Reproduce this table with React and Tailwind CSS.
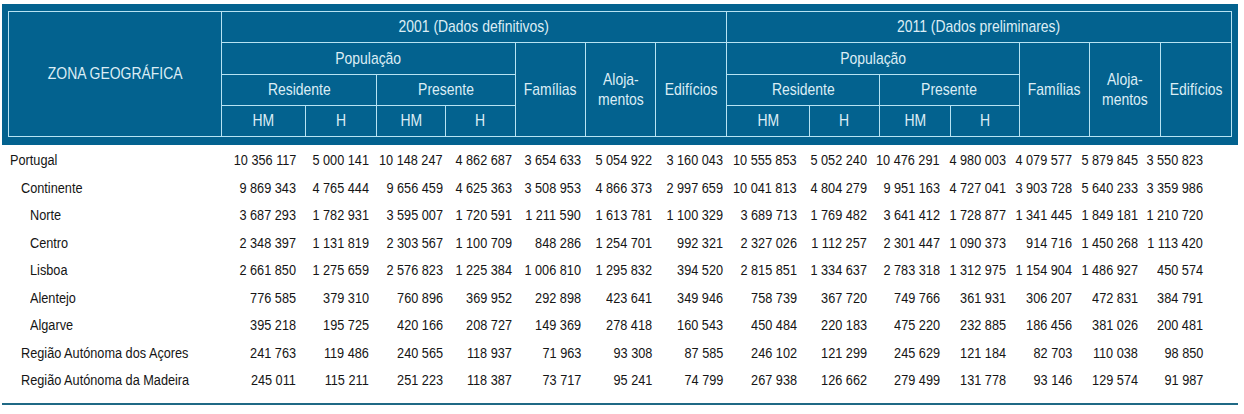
const rows = [
  { name: "Portugal", indent: "pl-[2px]", v: ["10 356 117", "5 000 141", "10 148 247", "4 862 687", "3 654 633", "5 054 922", "3 160 043", "10 555 853", "5 052 240", "10 476 291", "4 980 003", "4 079 577", "5 879 845", "3 550 823"] },
  { name: "Continente", indent: "pl-[13px]", v: ["9 869 343", "4 765 444", "9 656 459", "4 625 363", "3 508 953", "4 866 373", "2 997 659", "10 041 813", "4 804 279", "9 951 163", "4 727 041", "3 903 728", "5 640 233", "3 359 986"] },
  { name: "Norte", indent: "pl-[22px]", v: ["3 687 293", "1 782 931", "3 595 007", "1 720 591", "1 211 590", "1 613 781", "1 100 329", "3 689 713", "1 769 482", "3 641 412", "1 728 877", "1 341 445", "1 849 181", "1 210 720"] },
  { name: "Centro", indent: "pl-[22px]", v: ["2 348 397", "1 131 819", "2 303 567", "1 100 709", "848 286", "1 254 701", "992 321", "2 327 026", "1 112 257", "2 301 447", "1 090 373", "914 716", "1 450 268", "1 113 420"] },
  { name: "Lisboa", indent: "pl-[22px]", v: ["2 661 850", "1 275 659", "2 576 823", "1 225 384", "1 006 810", "1 295 832", "394 520", "2 815 851", "1 334 637", "2 783 318", "1 312 975", "1 154 904", "1 486 927", "450 574"] },
  { name: "Alentejo", indent: "pl-[22px]", v: ["776 585", "379 310", "760 896", "369 952", "292 898", "423 641", "349 946", "758 739", "367 720", "749 766", "361 931", "306 207", "472 831", "384 791"] },
  { name: "Algarve", indent: "pl-[22px]", v: ["395 218", "195 725", "420 166", "208 727", "149 369", "278 418", "160 543", "450 484", "220 183", "475 220", "232 885", "186 456", "381 026", "200 481"] },
  { name: "Região Autónoma dos Açores", indent: "pl-[13px]", v: ["241 763", "119 486", "240 565", "118 937", "71 963", "93 308", "87 585", "246 102", "121 299", "245 629", "121 184", "82 703", "110 038", "98 850"] },
  { name: "Região Autónoma da Madeira", indent: "pl-[13px]", v: ["245 011", "115 211", "251 223", "118 387", "73 717", "95 241", "74 799", "267 938", "126 662", "279 499", "131 778", "93 146", "129 574", "91 987"] },
];

const pads = ["pr-[9px]", "pr-[7px]", "pr-[2px]", "pr-[3px]", "pr-[4px]", "pr-[3px]", "pr-[3px]", "pr-[12px]", "pr-[12px]", "pr-[10px]", "pr-[13px]", "pr-[17px]", "pr-[22px]", "pr-[28px]"];

const cell = "bg-[#03628f] flex items-center justify-center text-center whitespace-nowrap";

// no narrow font installed, so squeeze the glyphs horizontally
function Narrow({ children, origin = "origin-center" }) {
  return <span className={`inline-block shrink-0 scale-x-[0.82] ${origin}`}>{children}</span>;
}

function Block({ year, c }) {
  return (
    <>
      <div className={`${cell} ${c.year} row-start-1 col-span-7`}><Narrow>{year}</Narrow></div>
      <div className={`${cell} ${c.pop} row-start-2 col-span-4`}><Narrow>População</Narrow></div>
      <div className={`${cell} ${c.fam} row-start-2 row-span-3`}><Narrow>Famílias</Narrow></div>
      <div className={`${cell} ${c.alo} row-start-2 row-span-3 leading-[20px]`}>
        <Narrow>
          Aloja-
          <br />
          mentos
        </Narrow>
      </div>
      <div className={`${cell} ${c.edi} row-start-2 row-span-3`}><Narrow>Edifícios</Narrow></div>
      <div className={`${cell} ${c.pop} row-start-3 col-span-2`}><Narrow>Residente</Narrow></div>
      <div className={`${cell} ${c.pre} row-start-3 col-span-2`}><Narrow>Presente</Narrow></div>
      <div className={`${cell} ${c.pop} row-start-4`}><Narrow>HM</Narrow></div>
      <div className={`${cell} ${c.h1} row-start-4`}><Narrow>H</Narrow></div>
      <div className={`${cell} ${c.pre} row-start-4`}><Narrow>HM</Narrow></div>
      <div className={`${cell} ${c.h2} row-start-4`}><Narrow>H</Narrow></div>
    </>
  );
}

export default function App() {
  return (
    <div className="bg-white w-[1244px] h-[414px] pt-[4px] pl-[2px] font-['Liberation_Sans',Arial,sans-serif]">
      <div className="w-[1236px] bg-[#03628f] px-[6px] pt-[7px] pb-[8px] text-[17px] text-[#dcedf5]">
        <div className="grid grid-cols-[212px_83px_70px_68px_69px_69px_69px_70px_82px_69px_70px_68px_69px_70px_70px] grid-rows-[30px_31px_30px_30px] gap-px p-px bg-[#b7e3f3] w-fit">
          <div className={`${cell} col-start-1 row-start-1 row-span-4`}><Narrow>ZONA GEOGRÁFICA</Narrow></div>
          <Block
            year="2001 (Dados definitivos)"
            c={{ year: "col-start-2", pop: "col-start-2", h1: "col-start-3", pre: "col-start-4", h2: "col-start-5", fam: "col-start-6", alo: "col-start-7", edi: "col-start-8" }}
          />
          <Block
            year="2011 (Dados preliminares)"
            c={{ year: "col-start-9", pop: "col-start-9", h1: "col-start-10", pre: "col-start-11", h2: "col-start-12", fam: "col-start-13", alo: "col-start-14", edi: "col-start-15" }}
          />
        </div>
      </div>

      <div className="pl-[6px] pt-[1px] text-[15.5px] text-[#151515]">
        {rows.map((r) => (
          <div key={r.name} className="grid grid-cols-[213px_84px_71px_69px_70px_70px_70px_71px_83px_70px_71px_69px_70px_71px_71px] h-[27.5px] leading-[27.5px]">
            <div className={`${r.indent} whitespace-nowrap`}>
              <Narrow origin="origin-left">{r.name}</Narrow>
            </div>
            {r.v.map((n, i) => (
              <div key={i} className={`flex justify-end whitespace-nowrap min-w-0 ${pads[i]}`}>
                <Narrow origin="origin-right">{n}</Narrow>
              </div>
            ))}
          </div>
        ))}
      </div>

      <div className="w-[1236px] h-[2px] mt-[9px] bg-[#1f6985]" />
    </div>
  );
}
